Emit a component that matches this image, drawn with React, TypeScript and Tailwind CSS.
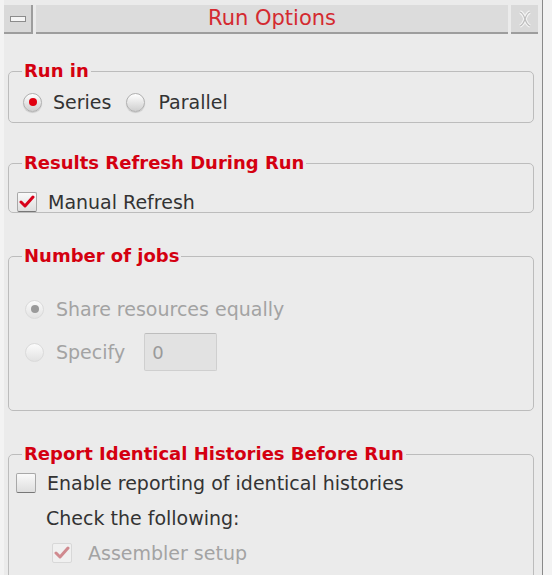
import React from "react"

function Radio({ checked, disabled }: { checked?: boolean; disabled?: boolean }) {
  return (
    <span
      className={`flex h-[19px] w-[19px] shrink-0 items-center justify-center rounded-full border ${
        disabled ? "border-[#dadada] bg-linear-to-b from-[#fbfbfb] to-[#e2e2e2]" : "border-[#b0b0b0] bg-linear-to-b from-white to-[#cfcfcf] shadow-[0_1px_1px_rgba(0,0,0,0.15)]"
      }`}
    >
      {checked && <span className={`h-[8px] w-[8px] rounded-full ${disabled ? "bg-[#9a9a9a]" : "bg-[#e00010]"}`} />}
    </span>
  )
}

function Check({ checked, disabled }: { checked?: boolean; disabled?: boolean }) {
  return (
    <span
      className={`flex h-[20px] w-[20px] shrink-0 items-center justify-center rounded-[2px] border ${
        disabled ? "border-[#d8d8d8] bg-[#f0f0f0]" : "border-[#a8a8a8] border-b-[#777] bg-linear-to-b from-[#fafafa] to-[#dedede]"
      }`}
    >
      {checked && (
        <svg width="16" height="14" viewBox="0 0 16 14">
          <path d="M2 7 L6 11 L14 2" fill="none" stroke={disabled ? "#d08a8f" : "#d8001a"} strokeWidth="3" strokeLinecap="round" strokeLinejoin="round" />
        </svg>
      )}
    </span>
  )
}

function Legend({ children }: { children: React.ReactNode }) {
  return <legend className="ml-[13px] px-[2px] text-[18px] leading-[20px] font-bold text-[#d40010]">{children}</legend>
}

export default function App() {
  return (
    <div className="h-[575px] w-[552px] overflow-hidden bg-[#f3f3f3] font-['DejaVu_Sans',sans-serif] text-[19px] text-[#333]">
      <div className="ml-[4px] h-full w-[539px] border-r border-[#8a8a8a] bg-[#ebebeb]">
        {/* title bar */}
        <div className="flex gap-[3px] pt-[5px]">
          <div className="flex h-[29px] w-[29px] items-center justify-center border-r-2 border-b-2 border-[#9d9d9d] bg-[#d9d9d9]">
            <span className="h-[6px] w-[16px] border border-[#8c8c8c] bg-[#f5f5f5]" />
          </div>
          <div className="flex h-[29px] w-[472px] items-center justify-center border-b-2 border-[#9d9d9d] bg-[#dcdcdc] text-[21px] text-[#d42a30]">
            Run Options
          </div>
          <div className="flex h-[29px] w-[27px] items-center justify-center border-b-2 border-[#9d9d9d] bg-[#d9d9d9]">
            <svg width="16" height="18" viewBox="0 0 16 18">
              <path d="M3 2 C6 3 7 6 8 9 C9 12 10 15 13 16 M13 2 C10 3 9 6 8 9 C7 12 6 15 3 16" fill="none" stroke="#f4f4f4" strokeWidth="3.5" />
              <path d="M3 2 C6 3 7 6 8 9 C9 12 10 15 13 16 M13 2 C10 3 9 6 8 9 C7 12 6 15 3 16" fill="none" stroke="#bdbdbd" strokeWidth="1.2" />
            </svg>
          </div>
        </div>

        <div className="pr-[8px] pl-[4px]">
          <fieldset className="mt-[27px] rounded-[5px] border border-[#bcbcbc]">
            <Legend>Run in</Legend>
            <div className="flex h-[20px] items-center pl-[14px] mt-[11px] mb-[10px]">
              <Radio checked />
              <span className="ml-[11px]">Series</span>
              <span className="ml-[15px]">
                <Radio />
              </span>
              <span className="ml-[13px]">Parallel</span>
            </div>
          </fieldset>

          <fieldset className="mt-[30px] rounded-[5px] border border-[#bcbcbc]">
            <Legend>Results Refresh During Run</Legend>
            <div className="mt-[19px] flex h-[20px] items-center pl-[8px]">
              <Check checked />
              <span className="ml-[11px]">Manual Refresh</span>
            </div>
          </fieldset>

          <fieldset className="mt-[33px] rounded-[5px] border border-[#bcbcbc] text-[#a3a3a3]">
            <Legend>Number of jobs</Legend>
            <div className="pt-[33px] pb-[39px] pl-[16px]">
              <div className="flex h-[20px] items-center">
                <Radio checked disabled />
                <span className="ml-[12px]">Share resources equally</span>
              </div>
              <div className="mt-[14px] flex h-[38px] items-center">
                <Radio disabled />
                <span className="ml-[12px]">Specify</span>
                <span className="ml-[19px] flex h-[38px] w-[73px] items-center rounded-[2px] border border-[#cfcfcf] border-t-[#bdbdbd] bg-[#e2e2e2] pl-[7px] text-[18px] text-[#9a9a9a]">
                  0
                </span>
              </div>
            </div>
          </fieldset>

          <fieldset className="mt-[33px] h-[200px] rounded-[5px] border border-[#bcbcbc]">
            <Legend>Report Identical Histories Before Run</Legend>
            <div className="pt-[9px] pl-[7px]">
              <div className="flex h-[20px] items-center">
                <Check />
                <span className="ml-[11px]">Enable reporting of identical histories</span>
              </div>
              <div className="mt-[15px] flex h-[20px] items-center pl-[30px]">Check the following:</div>
              <div className="mt-[15px] flex h-[20px] items-center pl-[36px] text-[#a3a3a3]">
                <Check checked disabled />
                <span className="ml-[16px]">Assembler setup</span>
              </div>
            </div>
          </fieldset>
        </div>
      </div>
    </div>
  )
}
